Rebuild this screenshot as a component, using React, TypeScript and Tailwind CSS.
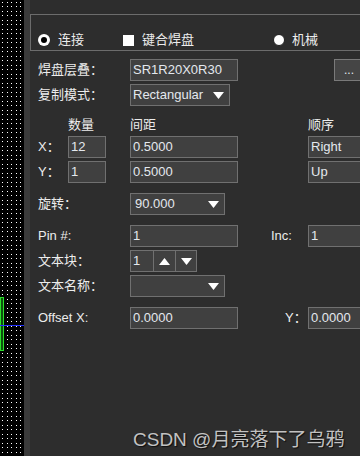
import React from 'react';

const font = "font-['Liberation_Sans','Noto_Sans_CJK_SC',sans-serif]";

const Box: React.FC<{ w: string; children?: React.ReactNode; pad?: string }> = ({ w, children, pad = 'pl-[2px]' }) => (
    <div className={`${w} h-[22px] shrink-0 flex items-center ${pad} bg-[#404040] border border-[#707070] text-[13px] text-[#e4e8ee] overflow-hidden whitespace-nowrap`}>
        {children}
    </div>
);

const Arrow: React.FC<{ up?: boolean }> = ({ up }) => (
    <svg width="11" height="7" viewBox="0 0 11 7">
        <path d={up ? 'M0 7 L5.5 0 L11 7 Z' : 'M0 0 L11 0 L5.5 7 Z'} fill="#ffffff" />
    </svg>
);

const Select: React.FC<{ w: string; text?: string; pad?: string }> = ({ w, text, pad = 'pl-[2px]' }) => (
    <div className={`${w} h-[22px] shrink-0 flex items-center justify-between ${pad} pr-[5px] bg-[#404040] border border-[#707070] text-[13px] text-[#e4e8ee]`}>
        <span>{text}</span>
        <Arrow />
    </div>
);

const Label: React.FC<{ w: string; children: React.ReactNode }> = ({ w, children }) => (
    <div className={`${w} shrink-0 text-[13px] text-[#ececec] whitespace-nowrap`}>{children}</div>
);

const DotStrip: React.FC = () => (
    <div className="relative w-[24px] h-full bg-black shrink-0">
        <svg width="24" height="456" className="block">
            <defs>
                <pattern id="dots" width="9" height="9" patternUnits="userSpaceOnUse">
                    <rect x="2" y="2" width="1" height="1" fill="#ffffff" />
                    <rect x="7" y="2" width="1" height="1" fill="#ffffff" />
                    <rect x="2" y="6" width="1" height="1" fill="#ffffff" />
                    <rect x="7" y="6" width="1" height="1" fill="#ffffff" />
                </pattern>
            </defs>
            <rect width="24" height="456" fill="url(#dots)" />
            <rect x="0.5" y="297.5" width="3" height="53" fill="#0d4f0d" stroke="#2adf2a" strokeWidth="1" />
            <rect x="0" y="325" width="24" height="1" fill="#2230ff" />
        </svg>
    </div>
);

export default function App() {
    return (
        <div className={`relative w-[360px] h-[456px] flex overflow-hidden ${font}`}>
            <DotStrip />
            <div className="w-[6px] h-full bg-[#3a3a3a] shrink-0" />
            <div className="flex-1 h-full bg-[#2d2d2d] pt-[14px] min-w-0">
                {/* option group */}
                <div className="h-[37px] border-y border-l border-[#6c6c6c] flex items-center pt-[15px] pl-[7px] text-[13px] text-[#ececec]">
                    <div className="w-[85px] flex items-center gap-[8px]">
                        <div className="w-[12px] h-[12px] rounded-full bg-white flex items-center justify-center">
                            <div className="w-[6px] h-[6px] rounded-full bg-black" />
                        </div>
                        <span>连接</span>
                    </div>
                    <div className="w-[150px] flex items-center gap-[8px]">
                        <div className="w-[11px] h-[11px] bg-white" />
                        <span>键合焊盘</span>
                    </div>
                    <div className="flex items-center gap-[7px]">
                        <div className="w-[12px] h-[12px] rounded-full bg-white border border-[#202020]" />
                        <span>机械</span>
                    </div>
                </div>

                <div className="pl-[8px] flex flex-col">
                    <div className="mt-[8px] h-[22px] flex items-center">
                        <Label w="w-[92px]">焊盘层叠：</Label>
                        <Box w="w-[108px]">SR1R20X0R30</Box>
                        <div className="ml-[96px] w-[30px] h-[22px] shrink-0 bg-[#454545] border border-[#7a7a7a] flex items-end justify-center pb-[4px] text-[12px] leading-none text-[#e4e8ee]">...</div>
                    </div>
                    <div className="mt-[3px] h-[22px] flex items-center">
                        <Label w="w-[92px]">复制模式：</Label>
                        <Select w="w-[100px]" text="Rectangular" />
                    </div>

                    <div className="mt-[8px] h-[22px] flex items-center text-[13px] text-[#ececec]">
                        <div className="w-[30px] shrink-0" />
                        <div className="w-[62px] shrink-0">数量</div>
                        <div className="w-[178px] shrink-0">间距</div>
                        <div className="shrink-0">顺序</div>
                    </div>
                    <div className="h-[22px] flex items-center">
                        <Label w="w-[30px]">X：</Label>
                        <Box w="w-[38px]">12</Box>
                        <div className="w-[24px] shrink-0" />
                        <Box w="w-[108px]">0.5000</Box>
                        <div className="w-[70px] shrink-0" />
                        <Box w="w-[70px]">Right</Box>
                    </div>
                    <div className="mt-[3px] h-[22px] flex items-center">
                        <Label w="w-[30px]">Y：</Label>
                        <Box w="w-[38px]">1</Box>
                        <div className="w-[24px] shrink-0" />
                        <Box w="w-[108px]">0.5000</Box>
                        <div className="w-[70px] shrink-0" />
                        <Box w="w-[70px]">Up</Box>
                    </div>

                    <div className="mt-[10px] h-[22px] flex items-center">
                        <Label w="w-[92px]">旋转：</Label>
                        <Select w="w-[95px]" text="90.000" pad="pl-[4px]" />
                    </div>

                    <div className="mt-[10px] h-[22px] flex items-center">
                        <Label w="w-[92px]">Pin #:</Label>
                        <Box w="w-[108px]">1</Box>
                        <div className="w-[33px] shrink-0" />
                        <Label w="w-[37px]">Inc:</Label>
                        <Box w="w-[70px]">1</Box>
                    </div>
                    <div className="mt-[3px] h-[22px] flex items-center">
                        <Label w="w-[92px]">文本块：</Label>
                        <div className="h-[22px] flex bg-[#404040] border border-[#707070] text-[13px] text-[#e4e8ee]">
                            <div className="w-[22px] flex items-center pl-[2px]">1</div>
                            <div className="w-[22px] flex items-center justify-center border-l border-[#707070]">
                                <Arrow up />
                            </div>
                            <div className="w-[21px] flex items-center justify-center border-l border-[#707070]">
                                <Arrow />
                            </div>
                        </div>
                    </div>
                    <div className="mt-[3px] h-[22px] flex items-center">
                        <Label w="w-[92px]">文本名称：</Label>
                        <Select w="w-[95px]" />
                    </div>

                    <div className="mt-[10px] h-[22px] flex items-center">
                        <Label w="w-[92px]">Offset X:</Label>
                        <Box w="w-[108px]">0.0000</Box>
                        <div className="w-[47px] shrink-0" />
                        <Label w="w-[23px]">Y：</Label>
                        <Box w="w-[70px]">0.0000</Box>
                    </div>
                </div>
            </div>

            <div className="absolute left-[133px] top-[426px] text-[19px] text-[#c2c2c2] whitespace-nowrap font-['Liberation_Sans','Noto_Sans_CJK_SC',sans-serif] [text-shadow:1px_1px_1px_rgba(0,0,0,0.7)]">
                CSDN @月亮落下了乌鸦
            </div>
        </div>
    );
}
